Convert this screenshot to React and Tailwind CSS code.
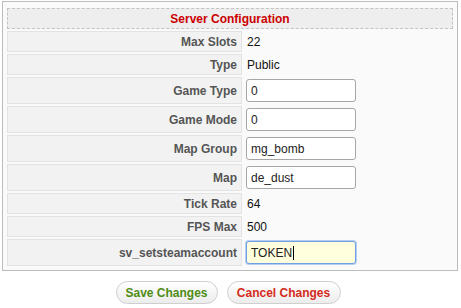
import React from "react";

const rows = [
  { label: "Max Slots", value: "22" },
  { label: "Type", value: "Public" },
  { label: "Game Type", input: "0" },
  { label: "Game Mode", input: "0" },
  { label: "Map Group", input: "mg_bomb" },
  { label: "Map", input: "de_dust" },
  { label: "Tick Rate", value: "64" },
  { label: "FPS Max", value: "500" },
  { label: "sv_setsteamaccount", input: "TOKEN", focused: true },
];

function Row({ r }) {
  const h = r.input !== undefined ? "h-[27px]" : "h-[21px]";
  return (
    <div className={`flex gap-[2px] ${h}`}>
      <div className="w-[235px] shrink-0 bg-[#f2f2f2] border border-[#e3e3e3] flex items-center justify-end pr-[4px] text-[12px] font-bold text-[#555]">
        {r.label}
      </div>
      <div className="flex-1 flex items-center pl-[2px] text-[12px] text-[#111]">
        {r.input !== undefined ? (
          r.focused ? (
            <div className="w-[110px] h-[23px] rounded-[3px] border border-[#6f9fe4] shadow-[0_0_0_1px_#b5cdf2] bg-[#ffffdd] flex items-center pl-[4px] text-[12px] text-[#222]">
              {r.input}
              <span className="inline-block w-[1px] h-[14px] bg-black ml-[1px]" />
            </div>
          ) : (
            <div className="w-[110px] h-[23px] rounded-[3px] border border-[#a6a6a6] bg-white flex items-center pl-[4px] text-[12px] text-[#222]">
              {r.input}
            </div>
          )
        ) : (
          <span className="pl-[1px]">{r.value}</span>
        )}
      </div>
    </div>
  );
}

export default function App() {
  return (
    <div className="w-[461px] h-[308px] bg-white" style={{ fontFamily: '"Liberation Sans", Arial, sans-serif' }}>
      <div className="ml-[2px] mt-[1px] w-[456px] border border-[#bcbcbc] bg-[#fafafa] pt-[6px] px-[4px] pb-[4px] flex flex-col gap-[2px]">
        <div className="h-[21px] bg-[#eeeeee] border border-dashed border-[#c4c4c4] flex items-center justify-center text-[12px] font-bold text-[#cc0000]">
          Server Configuration
        </div>
        {rows.map((r) => (
          <Row key={r.label} r={r} />
        ))}
      </div>
      <div className="flex justify-center gap-[9px] mt-[10px] pr-[5px]">
        <div className="w-[102px] h-[23px] rounded-full border border-[#cfcfcf] bg-gradient-to-b from-white to-[#ececec] flex items-center justify-center text-[12px] font-bold text-[#4e8c14]">
          Save Changes
        </div>
        <div className="w-[114px] h-[23px] rounded-full border border-[#cfcfcf] bg-gradient-to-b from-white to-[#ececec] flex items-center justify-center text-[12px] font-bold text-[#d42b1c]">
          Cancel Changes
        </div>
      </div>
    </div>
  );
}
